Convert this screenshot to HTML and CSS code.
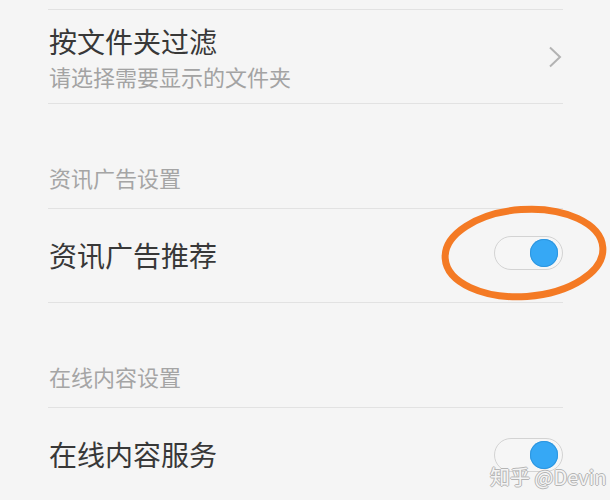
FILE: index.html
```html
<!DOCTYPE html>
<html lang="zh-CN">
<head>
<meta charset="utf-8">
<link rel="stylesheet" href="styles.css">
</head>
<body>
<div class="screen">
  <div class="list">
    <div class="item nav">
      <div class="texts">
        <div class="title">按文件夹过滤</div>
        <div class="sub">请选择需要显示的文件夹</div>
      </div>
      <svg class="chevron" width="14" height="22" viewBox="0 0 14 22"><path d="M2 1.5 L12 11 L2 20.5" fill="none" stroke="#b3b3b3" stroke-width="2"/></svg>
    </div>
    <div class="header">资讯广告设置</div>
    <div class="item">
      <div class="title">资讯广告推荐</div>
      <div class="toggle on up"><span class="knob"></span></div>
    </div>
    <div class="header">在线内容设置</div>
    <div class="item">
      <div class="title">在线内容服务</div>
      <div class="toggle on"><span class="knob"></span></div>
    </div>
  </div>
  <svg class="circle-mark" width="172" height="104" viewBox="0 0 172 104"><ellipse cx="85" cy="51" rx="79" ry="43.5" fill="none" stroke="#f47a24" stroke-width="7" transform="rotate(-4 85 51)"/></svg>
  <div class="watermark">知乎 @Devin</div>
</div>
</body>
</html>
```
FILE: styles.css
```css
html, body {
  margin: 0;
  padding: 0;
  background: #f5f5f5;
}
.screen {
  position: relative;
  width: 610px;
  height: 500px;
  overflow: hidden;
  font-family: "Noto Sans CJK SC", "Noto Sans", sans-serif;
}
.list {
  margin: 9px 47px 0 48px;
  display: flex;
  flex-direction: column;
}
.item {
  border-top: 1px solid #e2e2e2;
  border-bottom: 1px solid #e2e2e2;
  height: 93px;
  display: flex;
  align-items: center;
  justify-content: space-between;
  padding-left: 1px;
}
.item.nav {
  padding-top: 14px;
  padding-bottom: 10px;
  height: 69px;
}
.header + .item { border-top: none; }
.texts {
  display: flex;
  flex-direction: column;
}
.title {
  font-size: 28px;
  line-height: 35px;
  color: #383838;
}
.sub {
  font-size: 22px;
  line-height: 34px;
  color: #a3a3a3;
}
.chevron {
  margin-right: 1px;
  margin-bottom: 3px;
}
.header {
  height: 105px;
  box-sizing: border-box;
  padding-top: 58px;
  padding-left: 1px;
  font-size: 22px;
  line-height: 31px;
  color: #a5a5a5;
  border-bottom: 1px solid #e2e2e2;
}
.toggle {
  width: 69px;
  height: 34px;
  box-sizing: border-box;
  border: 1.5px solid #d3d3d3;
  border-radius: 17px;
  background: #f6f6f6;
  display: flex;
  align-items: center;
  justify-content: flex-end;
  padding-right: 4px;
}
.toggle.up { margin-bottom: 5px; }
.knob {
  width: 28px;
  height: 28px;
  border-radius: 50%;
  background: #36a8f5;
  box-shadow: inset 0 0 0 1px #2e96df;
}
.circle-mark {
  position: absolute;
  left: 439px;
  top: 202px;
}
.watermark {
  position: absolute;
  left: 490px;
  top: 464px;
  font-size: 20px;
  line-height: 26px;
  color: #f4f4f4;
  text-shadow: 1px 0 0 #b5b5b5, -1px 0 0 #b5b5b5, 0 1px 0 #b5b5b5, 0 -1px 0 #b5b5b5;
}
```
